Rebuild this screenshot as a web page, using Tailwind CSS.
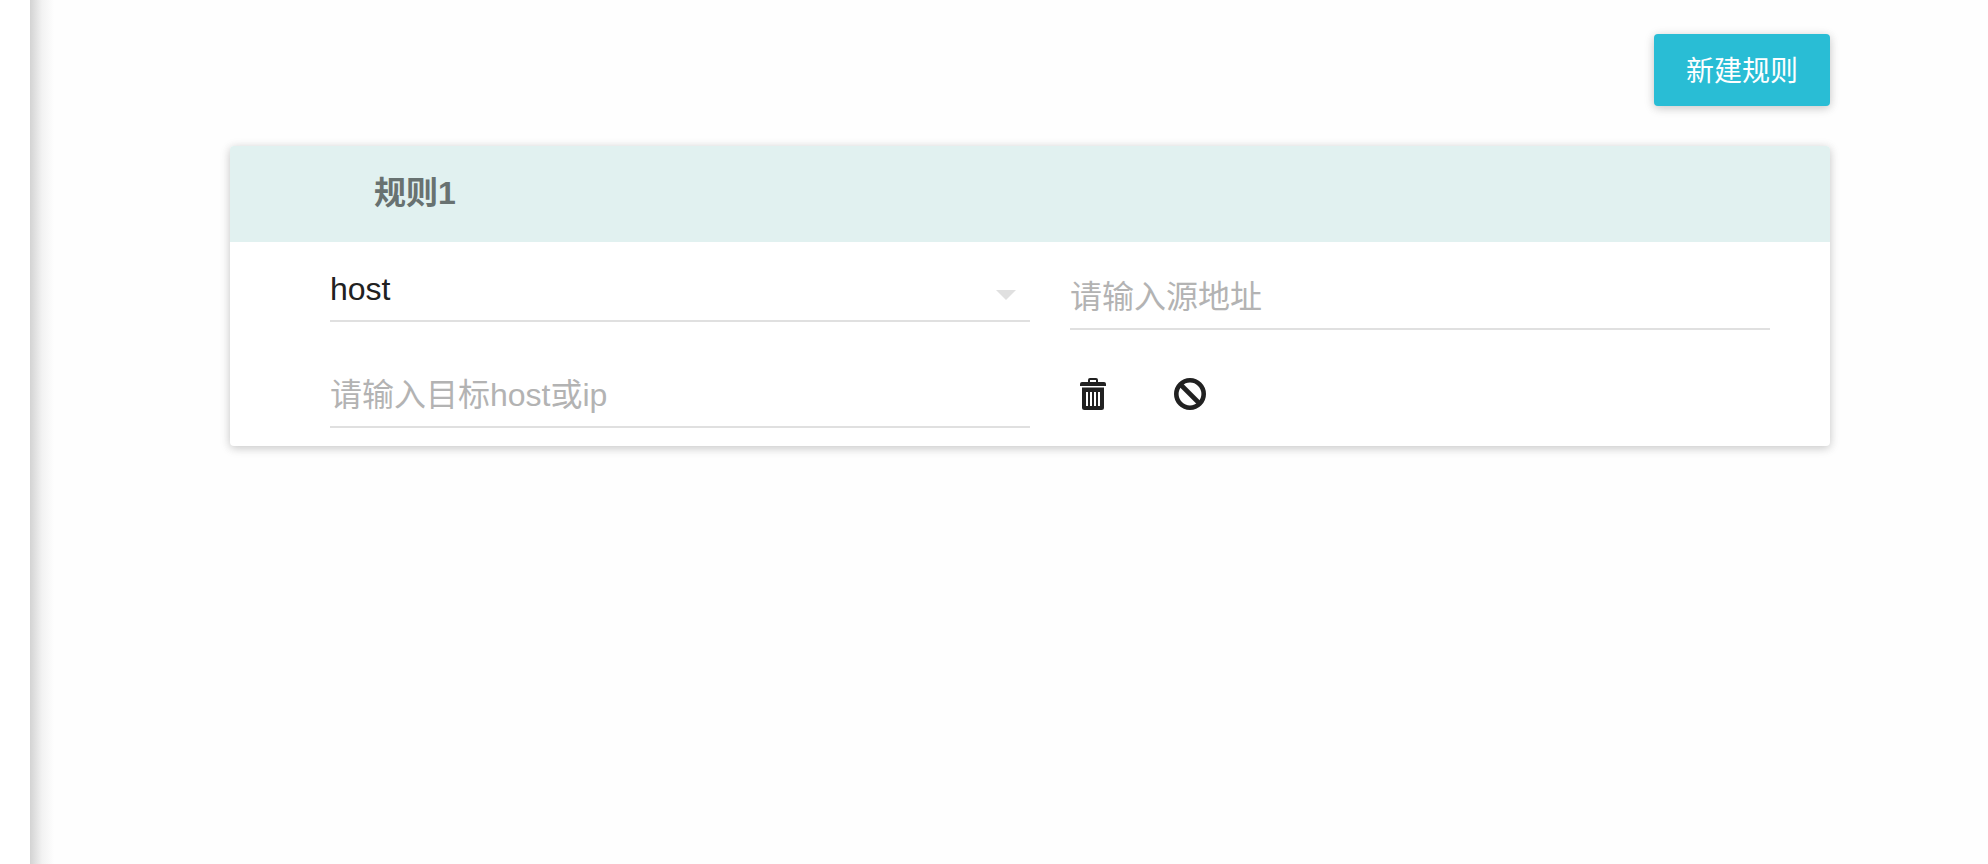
<!DOCTYPE html>
<html lang="zh-CN">
<head>
<meta charset="utf-8">
<meta name="viewport" content="width=device-width, initial-scale=1">
<title>规则</title>
<script src="https://cdn.jsdelivr.net/npm/@tailwindcss/browser@4"></script>
</head>
<body class="flex min-h-screen bg-[#fefefe] font-['Liberation_Sans','Noto_Sans_CJK_SC',sans-serif] text-[32px] text-[#212121]">
<aside class="w-[30px] shrink-0 bg-white"></aside>
<div class="w-6 shrink-0 bg-linear-to-r from-[#d3d3d3] via-[#f2f2f2] to-[#fefefe]" aria-hidden="true"></div>
<main class="flex-1 pt-[34px] pr-[158px] pl-44">
  <div class="flex justify-end">
    <button type="button" class="h-[72px] rounded px-8 pt-1 text-[28px] leading-[68px] text-white bg-[#29bdd5] shadow-[0_2px_12px_rgba(0,0,0,0.12),0_2px_8px_rgba(0,0,0,0.12)]">新建规则</button>
  </div>
  <section class="mt-10 overflow-hidden rounded bg-white shadow-[0_2px_12px_rgba(0,0,0,0.12),0_2px_8px_rgba(0,0,0,0.12)]">
    <h2 class="flex h-24 items-center bg-[#e1f1f0] pb-0.5 pl-36 font-bold text-[#687271]">规则1</h2>
    <form class="grid grid-cols-2 gap-x-10 pt-4 pr-[60px] pb-[18px] pl-[100px]">
      <div class="relative h-16">
        <select aria-label="类型" class="block h-16 w-full appearance-none border-b-2 border-[#e0e0e0] bg-transparent outline-none">
          <option>host</option>
          <option>ip</option>
        </select>
        <svg class="pointer-events-none absolute right-[14px] bottom-[22px] h-[10px] w-5" viewBox="0 0 20 10" fill="#e0e0e0" aria-hidden="true"><path d="M0 0h20L10 10z"/></svg>
      </div>
      <input type="text" aria-label="源地址" placeholder="请输入源地址" class="mt-2 h-16 w-full border-b-2 border-[#e0e0e0] bg-transparent outline-none placeholder:text-[#b3b3b3]">
      <input type="text" aria-label="目标" placeholder="请输入目标host或ip" class="mt-[34px] h-16 w-full border-b-2 border-[#e0e0e0] bg-transparent outline-none placeholder:text-[#b3b3b3]">
      <div class="mt-[34px] flex h-16 items-center gap-16 pb-1 pl-2">
        <button type="button" aria-label="删除">
          <svg class="h-8 w-8" viewBox="0 0 32 32" fill="#212121" aria-hidden="true">
            <path fill-rule="evenodd" d="M10 4V2a2 2 0 0 1 2-2h6a2 2 0 0 1 2 2v2h6a2 2 0 0 1 2 2v2H2V6a2 2 0 0 1 2-2zM12 4h6V2h-6zM4 9.500h22v20a2.500 2.500 0 0 1-2.500 2.500h-17A2.500 2.500 0 0 1 4 29.500zM8 14v14h2V14zM12 14v14h2V14zM16 14v14h2V14zM20 14v14h2V14z"/>
          </svg>
        </button>
        <button type="button" aria-label="禁用">
          <svg class="h-8 w-8" viewBox="0 0 32 32" fill="none" stroke="#212121" stroke-width="4.600" aria-hidden="true"><circle cx="16" cy="16" r="13.700"/><path d="M6.500 6.500l19 19"/></svg>
        </button>
      </div>
    </form>
  </section>
</main>
</body>
</html>
